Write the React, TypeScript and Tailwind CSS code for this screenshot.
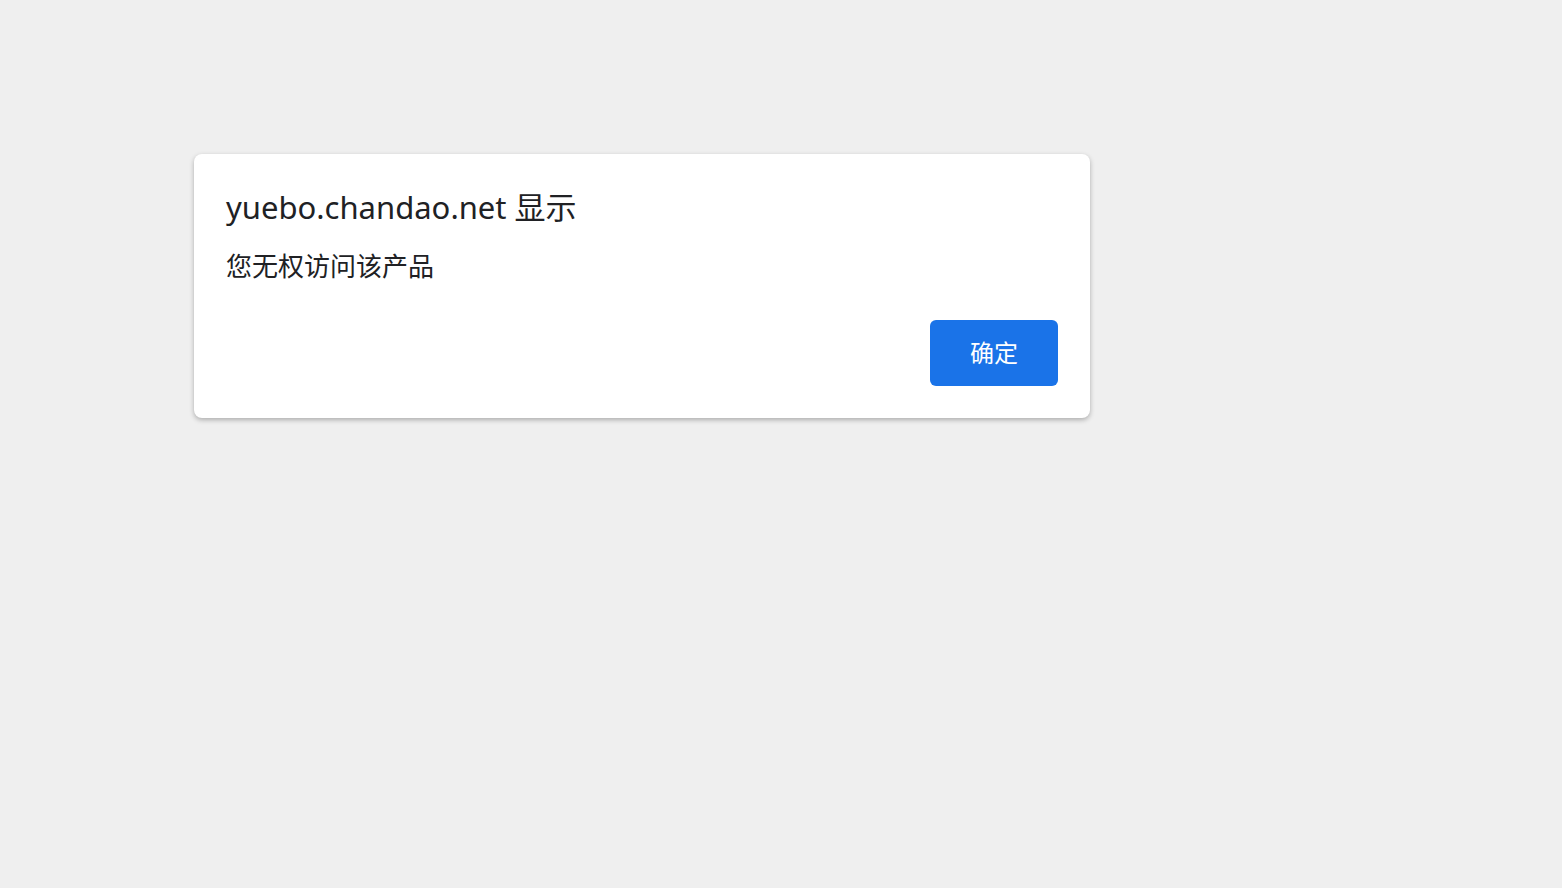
export default function App() {
  return (
    <div
      className="min-h-screen w-full bg-[#efefef] pt-[154px] pl-[194px]"
      style={{ fontFamily: '"Noto Sans", "Noto Sans CJK SC", sans-serif' }}
    >
      {/* alert dialog */}
      <div className="w-[896px] rounded-lg bg-white p-8 shadow-[0_2px_5px_rgba(0,0,0,0.28)]">
        <h1 className="text-[31px] leading-[42px] text-[#202124]">yuebo.chandao.net 显示</h1>
        <p className="mt-5 text-[26px] leading-[36px] text-[#202124]">您无权访问该产品</p>
        <div className="mt-9 flex justify-end">
          <button className="h-[66px] w-[128px] rounded-md bg-[#1a73e8] text-[24px] text-white">
            确定
          </button>
        </div>
      </div>
    </div>
  );
}
